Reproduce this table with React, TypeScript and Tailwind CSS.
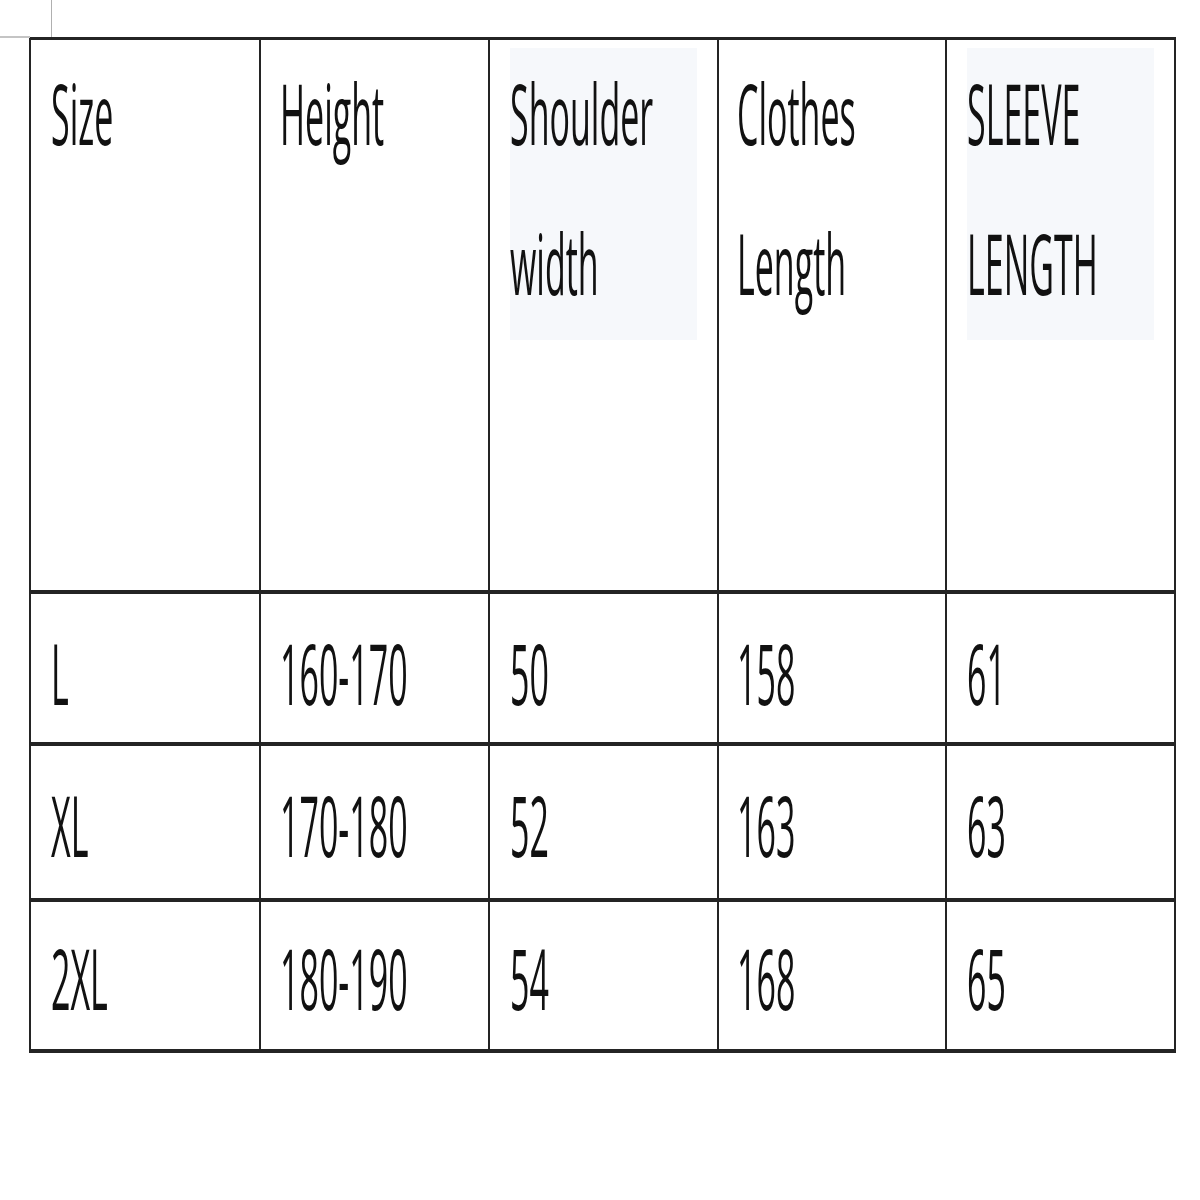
const header = [
  ["Size"],
  ["Height"],
  ["Shoulder", "width"],
  ["Clothes", "Length"],
  ["SLEEVE", "LENGTH"],
];

const rows = [
  { cells: ["L", "160-170", "50", "158", "61"], pt: "pt-[49px]", h: "h-[148px]" },
  { cells: ["XL", "170-180", "52", "163", "63"], pt: "pt-[49px]", h: "h-[152px]" },
  { cells: ["2XL", "180-190", "54", "168", "65"], pt: "pt-[46px]", h: "h-[147px]" },
];

const padLeft = ["pl-[20px]", "pl-[19px]", "pl-[20px]", "pl-[18px]", "pl-[20px]"];

function Line({ text }: { text: string }) {
  return (
    <div className="h-[60px] flex items-center whitespace-nowrap">
      <span className="inline-block leading-none text-[34px] font-medium text-[#111] scale-y-[2.47]">{text}</span>
    </div>
  );
}

export default function App() {
  return (
    <div className="relative w-[1200px] h-[1200px] bg-white overflow-hidden font-['Open_Sans',sans-serif]">
      {/* page margin marks */}
      <div className="absolute left-0 top-[36px] w-[30px] h-[2px] bg-[#c4c4c4]" />
      <div className="absolute left-[51px] top-0 w-px h-[37px] bg-[#b0b0b0]" />

      <div className="pt-[37px] pl-[29px]">
        <div className="w-[1147px] bg-[#242424] pt-[3px] pb-[4px] px-[2px] grid grid-cols-[228px_227px_227px_226px_227px] gap-x-[2px] gap-y-[4px]">
          {header.map((lines, i) => (
            <div key={i} className={`relative h-[550px] bg-white pt-[43px] ${padLeft[i]}`}>
              {lines.length > 1 && i !== 3 && (
                <div className="absolute left-[20px] right-[20px] top-[8px] h-[292px] bg-[#f6f8fb]" />
              )}
              <div className="relative flex flex-col gap-[90px]">
                {lines.map((t) => (
                  <Line key={t} text={t} />
                ))}
              </div>
            </div>
          ))}
          {rows.map((r, ri) =>
            r.cells.map((c, ci) => (
              <div key={`${ri}-${ci}`} className={`bg-white ${r.h} ${r.pt} ${padLeft[ci]}`}>
                <Line text={c} />
              </div>
            ))
          )}
        </div>
      </div>
    </div>
  );
}
